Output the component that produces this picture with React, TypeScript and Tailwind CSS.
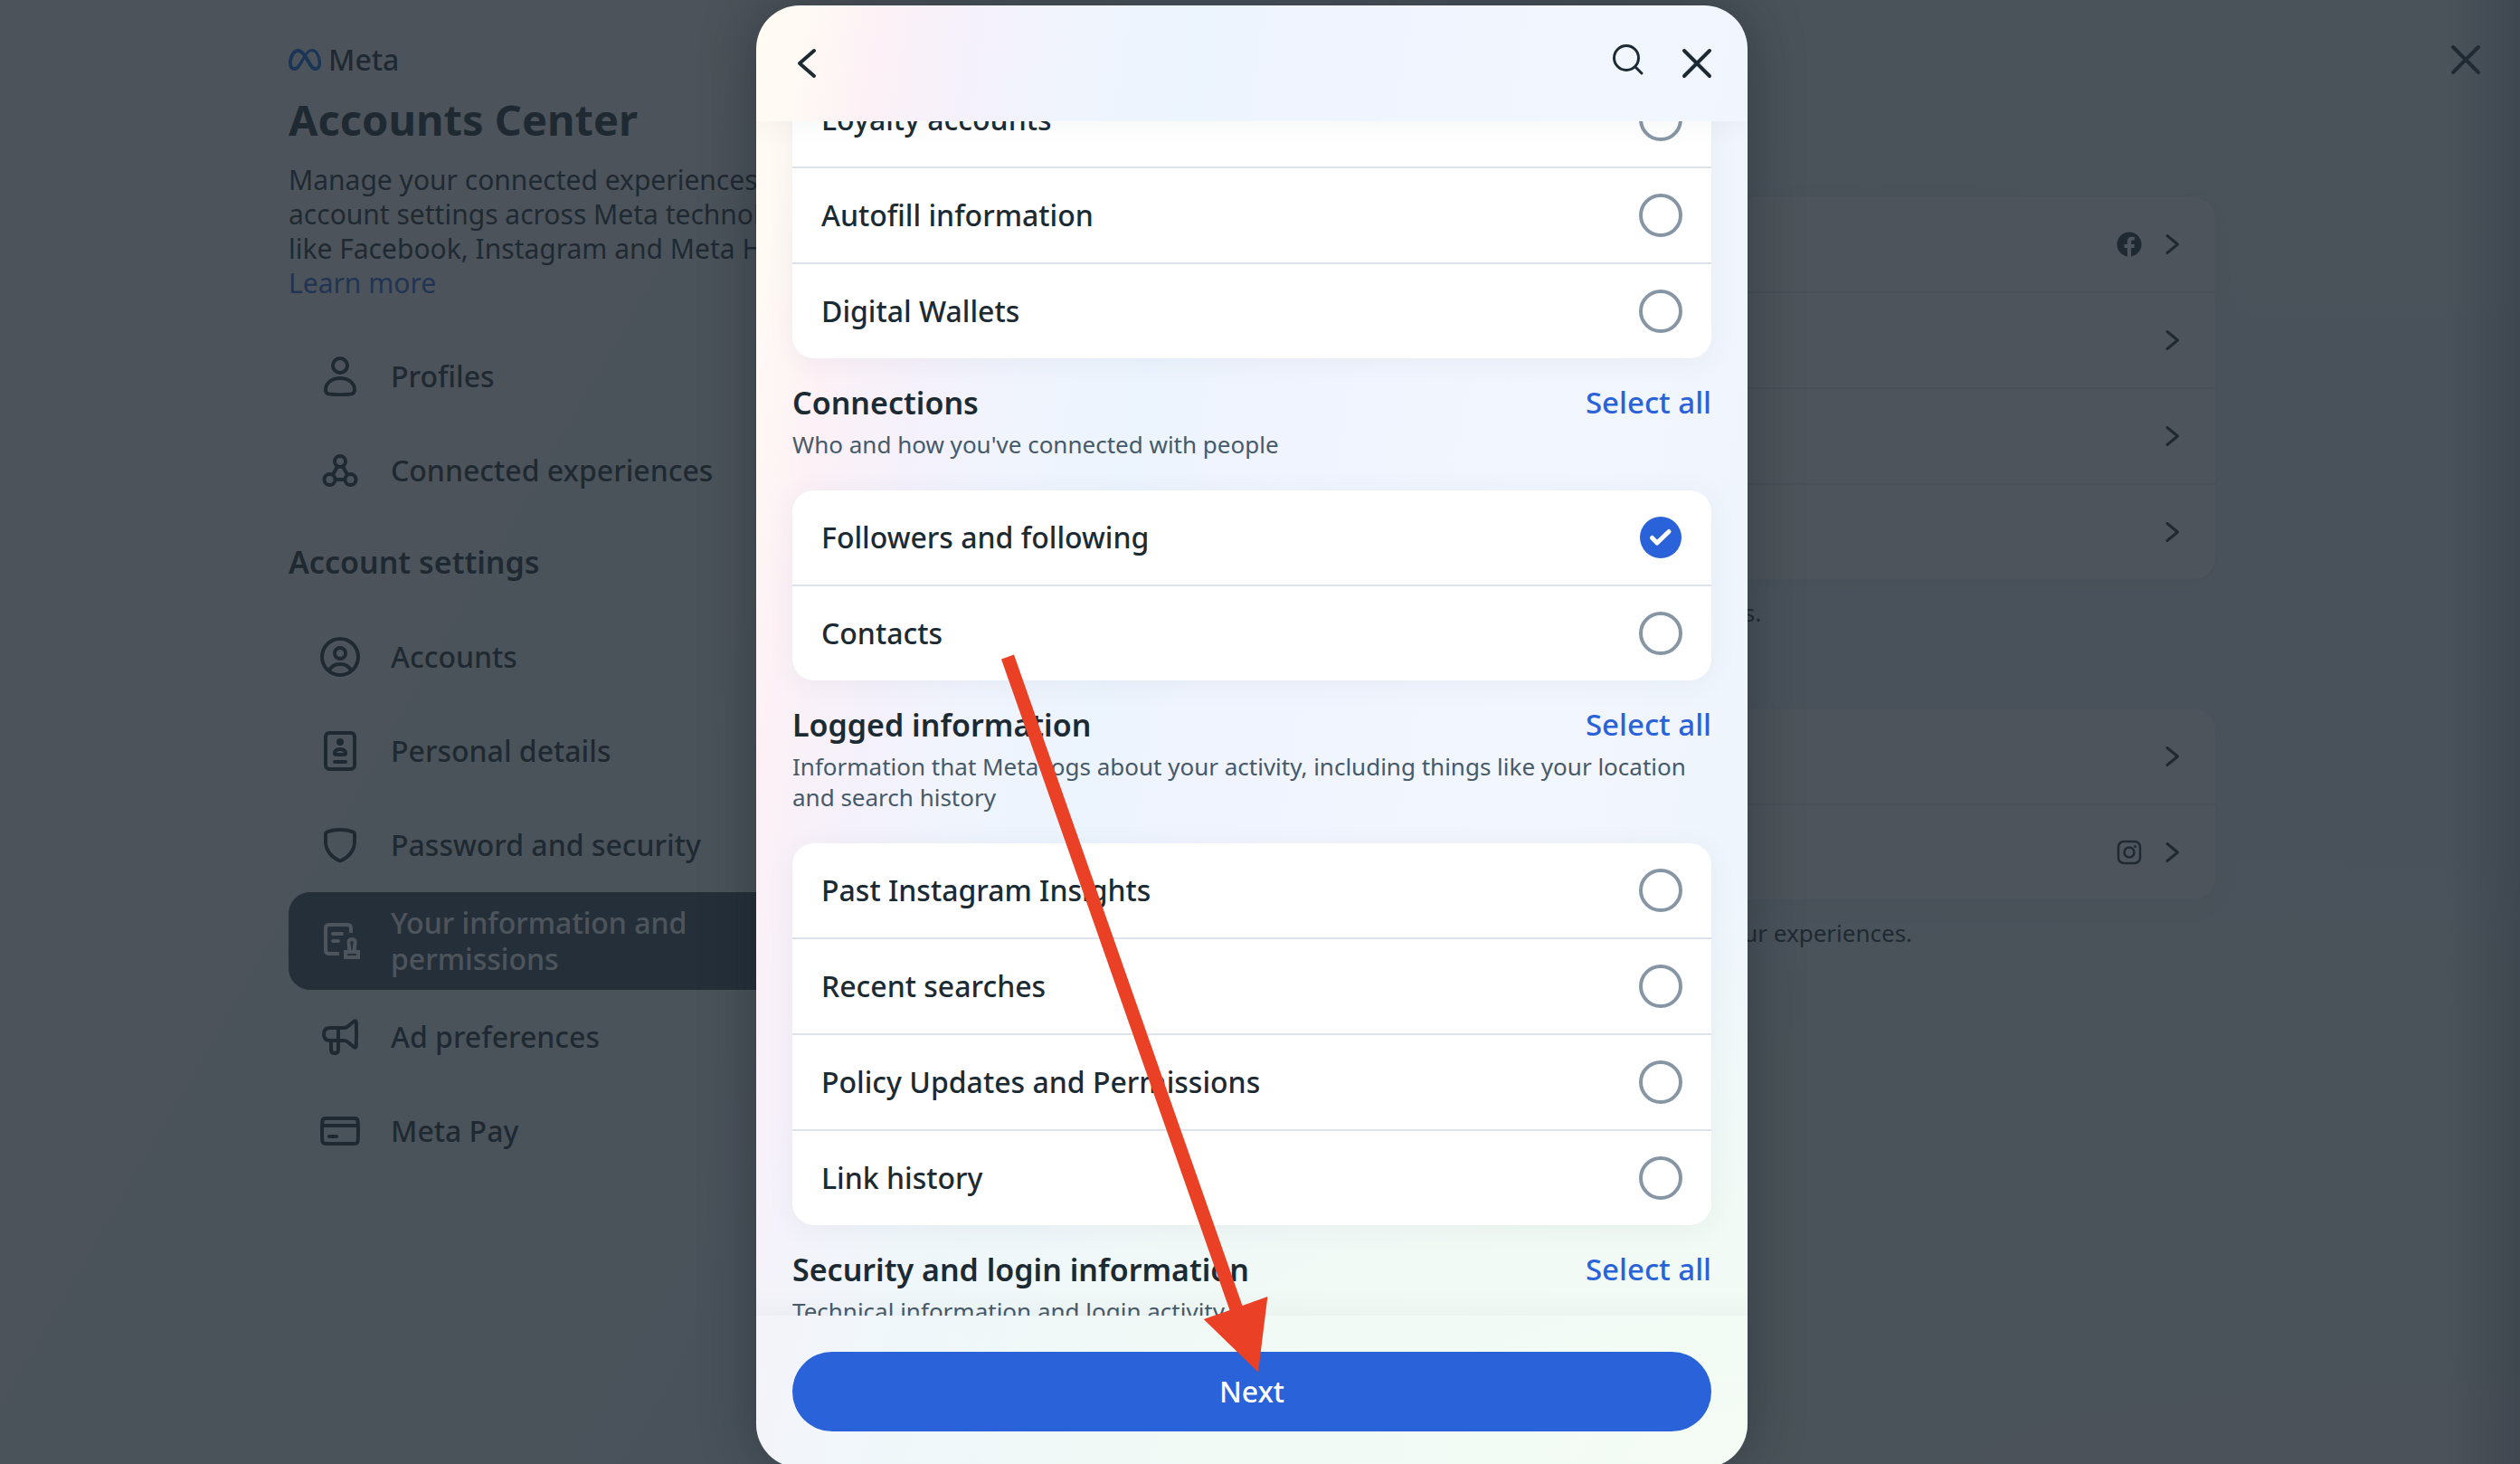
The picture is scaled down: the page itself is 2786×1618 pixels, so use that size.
import type { ReactNode } from "react";
import { SiMeta } from "react-icons/si";
import { FaFacebook } from "react-icons/fa";

function Icon({ children }: { children: ReactNode }) {
  return (
    <svg
      viewBox="0 0 44 44"
      className="size-11 shrink-0"
      fill="none"
      stroke="currentColor"
      strokeWidth="4"
      strokeLinecap="round"
      strokeLinejoin="round"
      aria-hidden="true"
    >
      {children}
    </svg>
  );
}

const profileIcon = (
  <Icon>
    <circle cx="22" cy="10" r="8" />
    <path d="M6 37c0-8 7-13 16-13s16 5 16 13c0 3-1 4-4 4.500Q22 43 10 41.500C7 41 6 40 6 37z" />
  </Icon>
);
const connectedIcon = (
  <Icon>
    <circle cx="22" cy="12" r="6" />
    <circle cx="10.500" cy="32" r="6" />
    <circle cx="33.500" cy="32" r="6" />
    <path d="M19 17.500l-5 9M25 17.500l5 9M17 32h10" />
  </Icon>
);
const accountsIcon = (
  <Icon>
    <circle cx="22" cy="22" r="20" />
    <circle cx="22" cy="18" r="6" />
    <path d="M10 37c2-4.500 6-7 12-7s10 2.500 12 7" />
  </Icon>
);
const detailsIcon = (
  <Icon>
    <rect x="6" y="2" width="32" height="40" rx="4" />
    <circle cx="22" cy="12" r="4" fill="currentColor" stroke="none" />
    <path d="M16 24.500c0-3 2.500-4.500 6-4.500s6 1.500 6 4.500q0 1.500-1.500 1.500h-9q-1.500 0-1.500-1.500z" />
    <path d="M16 34h12" />
  </Icon>
);
const shieldIcon = (
  <Icon>
    <path d="M6 10q0-2 2-2.700Q14 5 22 5t14 2.300q2 .7 2 2.700v8.500C38 28 31 36 22 39.500 13 36 6 28 6 18.500z" />
  </Icon>
);
const stampIcon = (
  <Icon>
    <path d="M34 13V8q0-4-4-4H10Q6 4 6 8v24q0 4 4 4h11" strokeLinecap="butt" />
    <path d="M14 14h10M14 22h6" />
    <path d="M32.500 33l-1-9q-.5-4 3.500-4t3.500 4l-1 9" />
    <path d="M28 34h14v6H28z" strokeLinejoin="miter" />
  </Icon>
);
const megaphoneIcon = (
  <Icon>
    <path d="M20 12h-9q-7 0-7 7t7 7h9zM20 12h6q3 0 5-2l6-5q2.500-2 2.800 1 .5 13 0 26-.3 3-2.800 1l-6-5q-2-2-5-2h-6" />
    <path d="M12 27v9q0 4 4 4t4-4v-9" />
  </Icon>
);
const payIcon = (
  <Icon>
    <path d="M6 8h32q3.500 0 3.700 3.500.6 10.500 0 21Q41.500 36 38 36H6q-3.500 0-3.700-3.500-.6-10.500 0-21Q2.500 8 6 8zM2 16h40M10 28h8" />
  </Icon>
);

function CloseIcon() {
  return (
    <Icon>
      <path d="M8 8l28 28M36 8L8 36" />
    </Icon>
  );
}

function NavItem({ icon, label, selected }: { icon: ReactNode; label: string; selected?: boolean }) {
  return (
    <li>
      <a
        href="#"
        aria-current={selected ? "page" : undefined}
        className={
          selected
            ? "flex min-h-[104px] items-center gap-[34px] rounded-3xl bg-[#344854] py-[14px] pr-16 pl-[35px] text-[32px] leading-10 font-medium text-white"
            : "flex min-h-[104px] items-center gap-[34px] pr-8 pl-[35px] text-[32px] leading-10 font-medium"
        }
      >
        {icon}
        <span>{label}</span>
      </a>
    </li>
  );
}

function SettingsRow({ label, badge }: { label: string; badge?: ReactNode }) {
  return (
    <li>
      <button type="button" className="flex h-[104px] w-full items-center gap-[22px] pr-[35px] pl-8 text-[32px] font-medium">
        <span className="flex-1 text-left">{label}</span>
        {badge}
        <svg viewBox="0 0 24 24" className="size-6" fill="none" stroke="currentColor" strokeWidth="3" strokeLinecap="round" strokeLinejoin="round" aria-hidden="true">
          <path d="M6 2.500L17.500 12 6 21.500" />
        </svg>
      </button>
    </li>
  );
}

const cardList = "divide-y-2 divide-[#dee3e9] rounded-3xl bg-white shadow-[0_4px_32px_rgba(52,72,84,0.06)]";

function CheckRow({ label, checked }: { label: string; checked?: boolean }) {
  return (
    <li>
      <label className="flex h-[104px] items-center justify-between px-8 text-[32px] leading-10 font-medium">
        <span>{label}</span>
        <span className="grid place-items-center">
          <input
            type="checkbox"
            defaultChecked={checked}
            className="peer col-start-1 row-start-1 size-12 appearance-none rounded-full border-4 border-[#8796a5] checked:size-[46px] checked:border-0 checked:bg-[#2962d9]"
          />
          <svg
            viewBox="0 0 48 48"
            className="pointer-events-none invisible col-start-1 row-start-1 size-12 peer-checked:visible"
            fill="none"
            stroke="white"
            strokeWidth="5"
            strokeLinecap="round"
            strokeLinejoin="round"
            aria-hidden="true"
          >
            <path d="M14.500 24.500l5.500 5.500L33 17.500" />
          </svg>
        </span>
      </label>
    </li>
  );
}

function SectionHead({ title, text }: { title: string; text: string }) {
  return (
    <div className="pt-7 pb-[34px]">
      <div className="flex items-center justify-between">
        <h2 className="text-[34px] leading-[42px] font-semibold">{title}</h2>
        <button type="button" className="text-[33px] leading-[42px] font-medium text-[#2962d9]">
          Select all
        </button>
      </div>
      <p className="mt-2 text-[26px] leading-[34px] text-[#465a69]">{text}</p>
    </div>
  );
}

function Dialog() {
  return (
    <div
      role="dialog"
      aria-modal="true"
      aria-label="Select information"
      className="relative mt-1.5 -mb-1 flex w-full max-w-[1096px] flex-col overflow-hidden rounded-[48px] bg-[radial-gradient(ellipse_120%_40%_at_100%_100%,#f4fcf4_0%,#f1faf5_45%,rgba(240,246,250,0)_100%),linear-gradient(99deg,#fffcf3_0%,#fffaf4_4%,#fdf1f6_10%,#f5f1fc_18%,#f0f4fd_26%,#ecf4fe_37%,#f0f4fe_45%,#f2f6fe_75%,#eef5fd_100%)] shadow-[0_0_60px_rgba(20,28,34,0.4)]"
    >
      <header className="flex h-32 shrink-0 items-center px-[34px]">
        <button type="button" aria-label="Back" className="size-11">
          <Icon>
            <path d="M30 8L14 22l16 14" />
          </Icon>
        </button>
        <div className="ml-auto flex gap-8">
          <button type="button" aria-label="Search" className="size-11">
            <Icon>
              <circle cx="20" cy="16" r="13.500" strokeWidth="3" />
              <path d="M30 26l7 7" strokeWidth="3" />
            </Icon>
          </button>
          <button type="button" aria-label="Close dialog" className="size-11">
            <CloseIcon />
          </button>
        </div>
      </header>

      <div className="relative min-h-0 flex-1 overflow-hidden px-10">
        <ul className={`${cardList} -mt-[54px]`}>
          <CheckRow label="Loyalty accounts" />
          <CheckRow label="Autofill information" />
          <CheckRow label="Digital Wallets" />
        </ul>
        <SectionHead title="Connections" text="Who and how you've connected with people" />
        <ul className={cardList}>
          <CheckRow label="Followers and following" checked />
          <CheckRow label="Contacts" />
        </ul>
        <SectionHead
          title="Logged information"
          text="Information that Meta logs about your activity, including things like your location and search history"
        />
        <ul className={cardList}>
          <CheckRow label="Past Instagram Insights" />
          <CheckRow label="Recent searches" />
          <CheckRow label="Policy Updates and Permissions" />
          <CheckRow label="Link history" />
        </ul>
        <SectionHead title="Security and login information" text="Technical information and login activity" />
        <div className="pointer-events-none absolute inset-x-0 top-0 h-7 bg-linear-to-b from-[#344854]/3 to-transparent" />
        <div className="pointer-events-none absolute inset-x-0 bottom-0 h-7 bg-linear-to-t from-[#344854]/3 to-transparent" />
      </div>

      <footer className="shrink-0 p-10">
        <button type="button" className="h-[88px] w-full rounded-full bg-[#2962d9] text-[32px] font-medium text-white">
          Next
        </button>
      </footer>

      <svg viewBox="1106 723 296 794" className="pointer-events-none absolute top-[717px] left-[270px] w-[296px]" fill="#ea4025" aria-hidden="true">
        <path d="M1107 728.500L1121 723.500 1373.500 1443 1401.400 1433 1391 1516.500 1330.700 1458 1359.500 1448z" />
      </svg>
    </div>
  );
}

export default function App() {
  return (
    <div className="relative h-screen overflow-hidden font-['Noto_Sans',sans-serif] text-[#1c2b33]">
      <div className="flex h-full items-start justify-between bg-[radial-gradient(ellipse_34%_22%_at_94%_0%,#f1f9f7_70%,rgba(241,249,247,0)_100%),radial-gradient(ellipse_30%_8%_at_100%_100%,#f6f6f8_40%,rgba(246,246,248,0)_100%),radial-gradient(ellipse_60%_42%_at_90%_100%,#eef7f5_75%,rgba(238,247,245,0)_100%),linear-gradient(120deg,#f8f7f9_20%,#f5f7f8_28%,#eff8f8_37%,#ecf5f9_44%,#ecf4fa_100%)] pr-[337px] pl-[319px]">
        <aside className="w-[640px] pt-[46px]">
          <div className="flex h-10 items-center gap-2">
            <SiMeta className="size-9 text-[#0064e0]" />
            <span className="text-[32px] leading-10 font-medium">Meta</span>
          </div>
          <h1 className="mt-5 text-[47px] leading-[52px] font-bold">Accounts Center</h1>
          <p className="mt-[22px] text-[30px] leading-[38px]">
            Manage your connected experiences and account settings across Meta technologies like Facebook, Instagram and
            Meta Horizon.{" "}
            <a href="#" className="block text-[#2962d9]">
              Learn more
            </a>
          </p>
          <nav className="mt-8" aria-label="Accounts Center">
            <ul>
              <NavItem icon={profileIcon} label="Profiles" />
              <NavItem icon={connectedIcon} label="Connected experiences" />
            </ul>
            <h2 className="pt-7 pb-8 text-[34px] leading-[42px] font-semibold">Account settings</h2>
            <ul>
              <NavItem icon={accountsIcon} label="Accounts" />
              <NavItem icon={detailsIcon} label="Personal details" />
              <NavItem icon={shieldIcon} label="Password and security" />
              <NavItem icon={stampIcon} label="Your information and permissions" selected />
              <NavItem icon={megaphoneIcon} label="Ad preferences" />
              <NavItem icon={payIcon} label="Meta Pay" />
            </ul>
          </nav>
        </aside>

        <main className="w-[1350px] pt-[86px]">
          <h2 className="text-[44px] leading-[52px] font-bold">Your information and permissions</h2>
          <ul className={`${cardList} mt-20`}>
            <SettingsRow label="Access your information" badge={<FaFacebook className="size-7" />} />
            <SettingsRow label="Download your information" />
            <SettingsRow label="Transfer a copy of your information" />
            <SettingsRow label="Search history" />
          </ul>
          <p className="mt-5 text-[26px] leading-[34px]">View, download or transfer your activity and information on our apps.</p>
          <ul className={`${cardList} mt-[90px]`}>
            <SettingsRow label="Your activity off Meta technologies" />
            <SettingsRow
              label="Apps and websites"
              badge={
                <svg viewBox="0 0 28 28" className="size-7" fill="none" stroke="currentColor" strokeWidth="2.500" aria-hidden="true">
                  <rect x="2" y="2" width="24" height="24" rx="6" />
                  <circle cx="14" cy="14" r="5.500" />
                  <circle cx="20.500" cy="7.500" r="1.500" fill="currentColor" stroke="none" />
                </svg>
              }
            />
          </ul>
          <p className="mt-5 text-[26px] leading-[34px]">
            Control what information Meta technologies can use to influence your experiences.
          </p>
        </main>

        <button type="button" aria-label="Close" className="absolute top-11 right-[38px] size-11">
          <CloseIcon />
        </button>
      </div>

      <div className="absolute inset-0 flex justify-center bg-[#202932]/80 pr-[18px]">
        <div className="absolute inset-y-0 right-0 w-20 bg-linear-to-r from-transparent to-[#2a333c]/35" />
        <Dialog />
      </div>
    </div>
  );
}
